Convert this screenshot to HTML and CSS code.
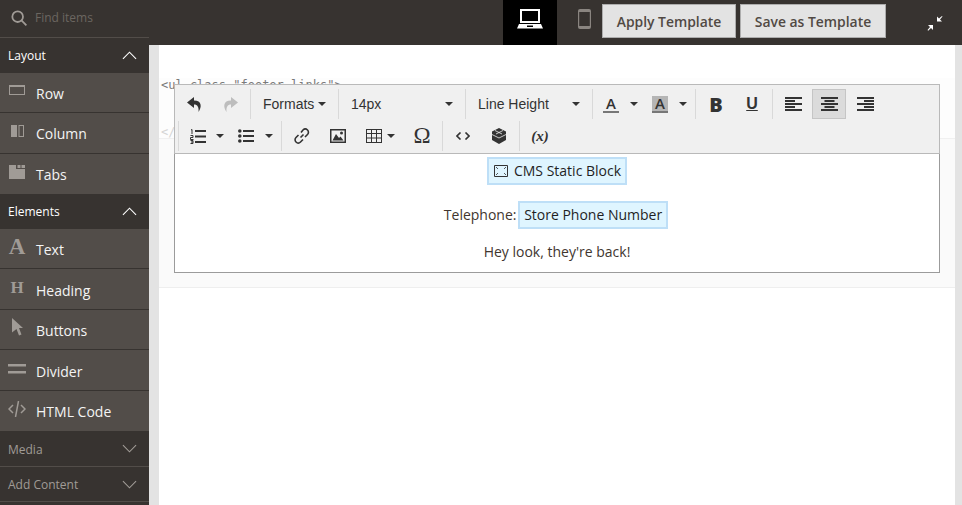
FILE: index.html
```html
<!DOCTYPE html>
<html lang="en">
<head>
    <meta charset="utf-8" />
    <title>Page Builder</title>
    <link rel="stylesheet" href="styles.css">
</head>
<body>

    <aside class="panel">
        <div class="search">
            <svg class="search-icon" width="16" height="16" viewBox="0 0 18 18"><circle cx="7.500" cy="7.500" r="6"/><path d="M11.800 11.800l5.500 5.500"/></svg>
            <span>Find items</span>
        </div>

        <div class="group-head"><span>Layout</span><svg class="chev" width="15" height="9" viewBox="0 0 16 9"><path d="M1 8l7-7 7 7"/></svg></div>
        <div class="item">
            <span class="item-icon"><svg width="16" height="10" viewBox="0 0 16 10"><path fill="#a09b96" d="M0 0h16v10H0z"/><path fill="#524d49" d="M1 2h14v7H1z"/></svg></span>Row
        </div>
        <div class="item">
            <span class="item-icon"><svg width="13" height="12" viewBox="0 0 13 12"><path fill="#a09b96" d="M0 0h6v12H0zM7.500 0H13v12H7.500z"/><path fill="#524d49" d="M8.500 1H12v10H8.500z"/></svg></span>Column
        </div>
        <div class="item">
            <span class="item-icon"><svg width="16" height="14" viewBox="0 0 16 14"><path fill="#a09b96" d="M0 0h7v4h9v10H0zM8.500 0h3v3h-3zM12.500 0H16v3h-3.500z"/></svg></span>Tabs
        </div>

        <div class="group-head"><span>Elements</span><svg class="chev" width="15" height="9" viewBox="0 0 16 9"><path d="M1 8l7-7 7 7"/></svg></div>
        <div class="item">
            <span class="item-icon glyph glyph-a">A</span>Text
        </div>
        <div class="item nudge">
            <span class="item-icon glyph glyph-h">H</span>Heading
        </div>
        <div class="item">
            <span class="item-icon"><svg width="12" height="18" viewBox="0 0 12 18"><path fill="#a09b96" d="M1 0l11 10H8l2.500 6.500-2.500 1L5.500 11 1 14.500z"/></svg></span>Buttons
        </div>
        <div class="item nudge">
            <span class="item-icon"><svg width="18" height="10" viewBox="0 0 18 10"><path fill="#a09b96" d="M0 0h18v2.500H0zM0 7h18v2.500H0z"/></svg></span>Divider
        </div>
        <div class="item">
            <span class="item-icon"><svg width="18" height="16" viewBox="0 0 18 16" fill="none" stroke="#a09b96" stroke-width="1.500"><path d="M5 4L1 8l4 4M13 4l4 4-4 4M10.500 0L7.500 16"/></svg></span>HTML Code
        </div>

        <div class="group-head closed nudge"><span>Media</span><svg class="chev" width="15" height="9" viewBox="0 0 16 9"><path d="M1 1l7 7 7-7"/></svg></div>
        <div class="group-head closed"><span>Add Content</span><svg class="chev" width="15" height="9" viewBox="0 0 16 9"><path d="M1 1l7 7 7-7"/></svg></div>
    </aside>

    <div class="main">
        <header class="topbar">
            <div class="device active">
                <svg width="26" height="20" viewBox="0 0 26 20"><path fill="#fff" d="M3 0h20v14H3zM5 2v10h16V2zM2 15h22l2 4.500H0zM10 16.500v1.500h6v-1.500z" fill-rule="evenodd"/></svg>
            </div>
            <div class="device phone">
                <svg width="13" height="20" viewBox="0 0 13 20"><path fill="#8a8580" fill-rule="evenodd" d="M2 0h9a2 2 0 0 1 2 2v16a2 2 0 0 1-2 2H2a2 2 0 0 1-2-2V2a2 2 0 0 1 2-2zM1.200 3v14h10.600V3z"/></svg>
            </div>
            <button class="tpl-btn apply">Apply Template</button>
            <button class="tpl-btn save">Save as Template</button>
            <svg class="collapse" width="16" height="16" viewBox="0 0 16 16"><path fill="#fff" d="M10 1.500l2 2L15 1l.500.500L13 4.500l2 2H10zM6 10v5l-2-2-2.800 2.800L.5 15 3 12 1 10z"/></svg>
        </header>

        <div class="stage">
            <div class="block">
                <pre class="code"><span>&lt;ul class="footer links"&gt;</span><span class="code-end">&lt;/ul&gt;</span></pre>
                <div class="code-under"></div>

                <div class="editor">
                    <div class="toolbar">
                        <div class="tool-row">
                            <div class="tool-group first">
                                <span class="tool"><svg width="15" height="15" viewBox="0 0 15 15"><path fill="#333" d="M7 0L0 5.500 7 11V7.500c3.500 0 5 2.500 4.500 7.500C15 10 15 3.500 7 3.500z"/></svg></span>
                                <span class="tool"><svg width="15" height="15" viewBox="0 0 15 15"><path fill="#bdbdbd" d="M8 0l7 5.500L8 11V7.500c-3.500 0-5 2.500-4.500 7.500C0 10 0 3.500 8 3.500z"/></svg></span>
                            </div>
                            <div class="tool-group">
                                <span class="tool select w-81">Formats<i class="caret tight"></i></span>
                            </div>
                            <div class="tool-group">
                                <span class="tool select w-120">14px<i class="caret push"></i></span>
                            </div>
                            <div class="tool-group">
                                <span class="tool select w-120">Line Height<i class="caret push"></i></span>
                            </div>
                            <div class="tool-group">
                                <span class="tool split w-47"><span class="letter">A</span><i class="caret wide"></i></span>
                                <span class="tool split w-47"><span class="letter shade">A</span><i class="caret wide"></i></span>
                            </div>
                            <div class="tool-group">
                                <span class="tool bold">B</span>
                                <span class="tool under-btn">U</span>
                            </div>
                            <div class="tool-group">
                                <span class="tool"><svg class="align" width="17" height="14" viewBox="0 0 17 14"><path d="M0 0h17v2H0zM0 3h10v2H0zM0 6h17v2H0zM0 9h10v2H0zM0 12h17v2H0z"/></svg></span>
                                <span class="tool on"><svg class="align" width="17" height="14" viewBox="0 0 17 14"><path d="M0 0h17v2H0zM3.500 3h10v2h-10zM0 6h17v2H0zM3.500 9h10v2h-10zM0 12h17v2H0z"/></svg></span>
                                <span class="tool"><svg class="align" width="17" height="14" viewBox="0 0 17 14"><path d="M0 0h17v2H0zM7 3h10v2H7zM0 6h17v2H0zM7 9h10v2H7zM0 12h17v2H0z"/></svg></span>
                            </div>
                        </div>
                        <div class="tool-row">
                            <div class="tool-group second">
                                <span class="tool split list-num"><svg width="16" height="15" viewBox="0 0 16 15"><path fill="#333" d="M5 1h11v2H5zM5 6.500h11v2H5zM5 12h11v2H5z"/><path fill="none" stroke="#333" d="M1 1l1-.5V5M.5 6.500h2.500v2H.5v2h3M.5 11.500h2.500v3H.5M1 13h2"/></svg><i class="caret"></i></span>
                                <span class="tool split list-bul"><svg width="16" height="14" viewBox="0 0 16 14"><path fill="#333" d="M5 1h11v2H5zM5 6h11v2H5zM5 11h11v2H5z"/><circle fill="#333" cx="1.800" cy="2" r="1.800"/><circle fill="#333" cx="1.800" cy="7" r="1.800"/><circle fill="#333" cx="1.800" cy="12" r="1.800"/></svg><i class="caret wide"></i></span>
                            </div>
                            <div class="tool-group">
                                <span class="tool"><svg width="16" height="16" viewBox="0 0 16 16" fill="none" stroke="#333" stroke-width="1.600"><path d="M6.500 9.500l3-3"/><path d="M7 4.500l2-2.500a3 3 0 0 1 4.500 4.500L11 9M9 11.500L6.500 14A3 3 0 0 1 2 9.500L4.500 7"/></svg></span>
                                <span class="tool"><svg width="16" height="14" viewBox="0 0 16 14"><path fill="#333" fill-rule="evenodd" d="M0 0h16v14H0zM1.500 1.500v11h13v-11z"/><path fill="#333" d="M2.500 11.500L6 5l3 4 1.500-1.500 3 4z"/><circle fill="#333" cx="11.500" cy="4" r="1.500"/></svg></span>
                                <span class="tool split table-btn"><svg width="16" height="14" viewBox="0 0 16 14"><path fill="#333" fill-rule="evenodd" d="M0 0h16v14H0zM1 1v3h4V1zM6 1v3h4V1zM11 1v3h4V1zM1 5v3.500h4V5zM6 5v3.500h4V5zM11 5v3.500h4V5zM1 9.500V13h4V9.500zM6 9.500V13h4V9.500zM11 9.500V13h4V9.500z"/></svg><i class="caret narrow"></i></span>
                                <span class="tool omega">Ω</span>
                            </div>
                            <div class="tool-group">
                                <span class="tool"><svg width="14" height="8" viewBox="0 0 14 8" fill="none" stroke="#333" stroke-width="1.600"><path d="M4.500 .5L1 4l3.500 3.500M9.500 .5L13 4 9.500 7.500"/></svg></span>
                                <span class="tool"><svg width="14" height="16" viewBox="0 0 14 16"><path fill="#333" d="M7 0l7 3.500V12l-7 4-7-4V3.500z"/><path fill="none" stroke="#efefef" stroke-width=".8" d="M0 6.500l7 3.500 7-3.500M3 2.500l7 3.500M11 2.500L4 6"/></svg></span>
                            </div>
                            <div class="tool-group">
                                <span class="tool variable">(x)</span>
                            </div>
                        </div>
                    </div>

                    <div class="content">
                        <p class="line"><span class="widget"><svg width="14" height="12" viewBox="0 0 14 12" fill="none" stroke="#333"><path d="M.5 .5h13v11H.5z"/><path stroke-width=".8" d="M2 2l2 2M12 2l-2 2M2 10l2-2M12 10l-2-2"/></svg>CMS Static Block</span></p>
                        <p class="line">Telephone: <span class="widget phone-var">Store Phone Number</span></p>
                        <p class="line plain">Hey look, they're back!</p>
                    </div>
                </div>
            </div>
        </div>
    </div>

</body>
</html>
```

FILE: styles.css
```css
html, body {
    height: 100%;
}

body {
    margin: 0;
    display: flex;
    overflow: hidden;
    font-family: 'Open Sans', sans-serif;
    background-color: #fff;
    color: #333;
}

.panel {
    width: 149px;
    flex: none;
    height: 505px;
    background-color: #373330;
    color: #fff;
}

.search {
    height: 35px;
    display: flex;
    align-items: center;
    gap: 8px;
    padding: 0 0 2px 11px;
    font-size: 12px;
    color: #6b6660;
    border-bottom: 1px solid #524d49;
}

.search-icon {
    fill: none;
    stroke: #a09b96;
    stroke-width: 2;
}

.group-head {
    height: 34.500px;
    display: flex;
    align-items: center;
    justify-content: space-between;
    padding: 0 12px 0 8px;
    font-size: 12px;
    color: #fff;
}

.group-head.closed {
    color: #a09b96;
    border-bottom: 1px solid #524d49;
    padding-top: 1px;
    height: 33.500px;
}

.group-head.nudge span {
    margin-top: 2px;
}

.chev {
    fill: none;
    stroke: #fff;
    stroke-width: 1.200;
}

.closed .chev {
    stroke: #a09b96;
}

.item {
    height: 40.500px;
    box-sizing: border-box;
    display: flex;
    align-items: center;
    padding-top: 2px;
    font-size: 14px;
    background-color: #524d49;
    color: #f4f4f4;
    border-bottom: 1px solid #373330;
}

.item.nudge {
    padding-top: 4px;
}

.item:has(+ .group-head) {
    border-bottom: none;
}

.item-icon {
    width: 36px;
    flex: none;
    display: flex;
    justify-content: center;
    padding-right: 2px;
    box-sizing: border-box;
    margin-top: -6px;
}

.glyph {
    font-family: 'Liberation Serif', serif;
    font-weight: bold;
    color: #a09b96;
    line-height: 1;
}

.glyph-a {
    font-size: 23px;
}

.glyph-h {
    font-size: 17px;
}

.main {
    flex: 1;
    min-width: 0;
    display: flex;
    flex-direction: column;
}

.topbar {
    height: 45px;
    flex: none;
    display: flex;
    align-items: flex-start;
    background-color: #373330;
    padding-left: 354px;
}

.device {
    width: 54px;
    height: 45px;
    box-sizing: border-box;
    padding-bottom: 7px;
    display: flex;
    align-items: center;
    justify-content: center;
}

.device.active {
    background-color: #000;
}

.device.phone {
    width: 45px;
    padding-left: 9px;
}

.tpl-btn {
    height: 34px;
    margin: 4px 4px 0 0;
    padding: 0;
    font-family: 'Open Sans', sans-serif;
    font-size: 13.900px;
    font-weight: 600;
    color: #514943;
    background-color: #e3e3e3;
    border: 1px solid #adadad;
    border-radius: 0;
}

.apply {
    width: 134px;
}

.save {
    width: 146px;
}

.collapse {
    margin: 15px 0 0 37px;
}

.stage {
    flex: 1;
    padding: 0 7px 0 10px;
    background-color: #e3e3e3;
}

.block {
    position: relative;
    height: 100%;
    padding-top: 33px;
    box-sizing: border-box;
    background: #fff;
}

.code {
    margin: 0;
    height: 61px;
    box-sizing: border-box;
    padding: 0 0 0 2px;
    font-family: 'DejaVu Sans Mono', monospace;
    font-size: 12px;
    color: #7a7a7a;
    background-color: #fdfdfd;
    border-bottom: 1px solid #f0f0f0;
    overflow: hidden;
}

.code span {
    display: block;
    line-height: 15px;
    margin-bottom: 32px;
}

.code-end {
    color: #d5d5d5;
}

.code-under {
    height: 149px;
    box-sizing: border-box;
    background-color: #fafafa;
    border-bottom: 1px solid #eee;
}

.editor {
    position: absolute;
    left: 15px;
    top: 39px;
    width: 766px;
    background-color: #fff;
}

.toolbar {
    height: 70px;
    box-sizing: border-box;
    padding: 4px 0 0;
    background-color: #f0f0f0;
    border: 1px solid #b9b9b9;
    font-family: 'Liberation Sans', sans-serif;
    font-size: 14px;
    color: #333;
}

.tool-row {
    display: flex;
    height: 30px;
    margin-bottom: 2px;
}

.tool-group {
    display: flex;
    gap: 2px;
    padding: 0 3px;
    border-left: 1px solid #d9d9d9;
}

.tool-group.first {
    border-left: none;
    padding: 0 2px;
    margin-right: 1px;
}

.tool-group.second {
    margin-left: 3px;
    padding: 0 3px;
}

.tool {
    width: 34px;
    height: 30px;
    box-sizing: border-box;
    display: flex;
    align-items: center;
    justify-content: center;
    flex: none;
}

.tool.on {
    background-color: #dbdbdb;
    border: 1px solid #c5c5c5;
}

.select {
    justify-content: flex-start;
    padding-left: 9px;
}

.split {
    justify-content: flex-start;
    padding-left: 7px;
}

.w-81 {
    width: 81px;
}

.w-120 {
    width: 120px;
}

.w-47 {
    width: 47px;
}

.list-num {
    width: 48px;
    padding-left: 8px;
}

.list-bul {
    width: 46px;
    padding-left: 6px;
}

.table-btn {
    width: 46px;
    padding-left: 9px;
}

.caret {
    width: 0;
    height: 0;
    margin-left: 10px;
    border-top: 4px solid #333;
    border-left: 4px solid transparent;
    border-right: 4px solid transparent;
}

.caret.wide {
    margin-left: 11px;
}

.caret.tight {
    margin-left: 4px;
}

.caret.narrow {
    margin-left: 5px;
}

.caret.push {
    margin-left: auto;
    margin-right: 9px;
}

.letter {
    display: block;
    width: 16px;
    height: 17px;
    flex: none;
    text-align: center;
    font-family: 'Open Sans', sans-serif;
    font-weight: 600;
    font-size: 15px;
    line-height: 15px;
    border-bottom: 2px solid #777;
    box-sizing: border-box;
}

.letter.shade {
    background-color: #b5b5b5;
}

.bold {
    font-family: 'Open Sans', sans-serif;
    font-size: 20px;
    font-weight: 800;
}

.under-btn {
    font-size: 16px;
    font-weight: bold;
    text-decoration: underline;
}

.align {
    fill: #333;
}

.omega {
    font-family: 'Liberation Serif', serif;
    font-size: 23px;
}

.variable {
    font-family: 'Liberation Serif', serif;
    font-size: 15px;
    font-style: italic;
    font-weight: bold;
}

.content {
    height: 119px;
    box-sizing: border-box;
    padding-top: 3px;
    border: 1px solid #9b9b9b;
    border-top: none;
    font-size: 14px;
    text-align: center;
    color: #41362f;
}

.line {
    margin: 0 0 16px;
    height: 28px;
    line-height: 28px;
}

.line.plain {
    margin-top: -7px;
}

.widget {
    display: inline-flex;
    align-items: center;
    gap: 6px;
    height: 28px;
    box-sizing: border-box;
    padding: 0 4px;
    background-color: #dff5ff;
    border: 2px solid #bedff7;
    color: #1f1f1f;
    vertical-align: top;
}

.widget svg {
    margin-left: 1px;
}

.phone-var {
    margin: 0 2px 0 -2px;
}
```
